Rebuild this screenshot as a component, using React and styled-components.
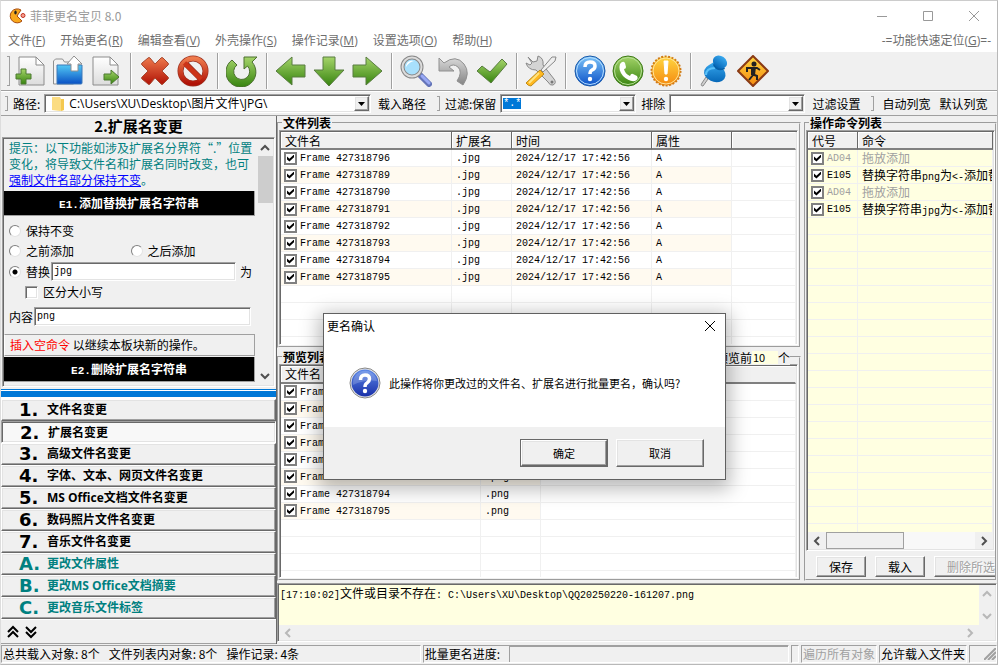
import React, { useEffect, useRef } from 'react';
import styled, { createGlobalStyle, css } from 'styled-components';

const GlobalStyle = createGlobalStyle`
    * {
        box-sizing: border-box;
    }

    body {
        margin: 0;
        background: #f0f0f0;
        color: #000;
        font-family: "Noto Sans CJK SC", sans-serif;
        font-size: 12px;
        line-height: 16px;
    }

    button, input, select {
        font: inherit;
        color: inherit;
        margin: 0;
    }
`;

// Classic bevels shared by the panels, boxes and buttons
const sunken = css`
    border: 1px solid;
    border-color: #a0a0a0 #fff #fff #a0a0a0;
    box-shadow: inset 1px 1px 0 #696969, inset -1px -1px 0 #e3e3e3;
`;

const raised = css`
    border: 1px solid;
    border-color: #fff #696969 #696969 #fff;
    box-shadow: inset -1px -1px 0 #a0a0a0, inset 1px 1px 0 #e3e3e3;
`;

const menus = [
    ['文件', 'F'],
    ['开始更名', 'R'],
    ['编辑查看', 'V'],
    ['外壳操作', 'S'],
    ['操作记录', 'M'],
    ['设置选项', 'O'],
    ['帮助', 'H'],
];

const frames = ['796', '789', '790', '791', '792', '793', '794', '795'].map((n) => `Frame 427318${n}`);

const commands = [
    { code: 'AD04' },
    { code: 'E105', ext: 'png' },
    { code: 'AD04' },
    { code: 'E105', ext: 'jpg' },
];

const sections = [
    { key: '1', label: '文件名变更' },
    { key: '2', label: '扩展名变更', active: true },
    { key: '3', label: '高级文件名变更' },
    { key: '4', label: '字体、文本、网页文件名变更' },
    { key: '5', label: 'MS Office文档文件名变更' },
    { key: '6', label: '数码照片文件名变更' },
    { key: '7', label: '音乐文件名变更' },
    { key: 'A', label: '更改文件属性', extra: true },
    { key: 'B', label: '更改MS Office文档摘要', extra: true },
    { key: 'C', label: '更改音乐文件标签', extra: true },
];

const Gradient = ({ id, from, to }) => (
    <linearGradient id={id} x1="0" y1="0" x2="0" y2="1">
        <stop offset="0" stopColor={from} />
        <stop offset="1" stopColor={to} />
    </linearGradient>
);

const Gradients = () => (
    <HiddenSvg width="0" height="0" aria-hidden="true">
        <defs>
            <Gradient id="green" from="#a5d46a" to="#37840f" />
            <Gradient id="red" from="#ee7a4c" to="#b01206" />
            <Gradient id="blue" from="#7cc4f8" to="#0a50c8" />
            <Gradient id="folder" from="#52c8f4" to="#0a50c4" />
            <Gradient id="paper" from="#ffffff" to="#dcdcdc" />
            <Gradient id="grey" from="#d8d8d8" to="#848484" />
            <Gradient id="amber" from="#ffd640" to="#f58a10" />
            <Gradient id="navy" from="#5b88e8" to="#1a30a8" />
            <Gradient id="pin" from="#38a8ee" to="#0668b8" />
        </defs>
    </HiddenSvg>
);

const Paper = ({ x }) => (
    <>
        <path d={`M${x} 2h17l8 8v20h-25z`} fill="url(#paper)" stroke="#8c8c8c" />
        <path d={`M${x + 17} 2v8h8z`} fill="#fff" stroke="#8c8c8c" />
    </>
);

const art = {
    add: (
        <>
            <Paper x={5} />
            <path d="M7 14h5v5h5v5h-5v5H7v-5H2v-5h5z" fill="url(#green)" stroke="#4c7a30" />
        </>
    ),
    open: (
        <>
            <path d="M1.500 29V6l2-2h7l2 3h9v22z" fill="#f2f2f2" stroke="#909090" />
            <path d="M5 10h25v18q0 1-1 1H5z" fill="url(#folder)" stroke="#3c78b8" />
            <path d="M22 1l8 8h-4v7h-7V9h-4z" fill="#fff" stroke="#909090" />
        </>
    ),
    export: (
        <>
            <Paper x={3} />
            <path d="M14 19h7v-4l8 7-8 7v-4h-7z" fill="url(#green)" stroke="#4c7a30" />
        </>
    ),
    remove: (
        <path
            d="M3 8l6-5q1-1 2 0l5 6 6-6q1-1 2 0l5 5q1 1 0 2l-6 6 6 6q1 1 0 2l-5 5q-1 1-2 0l-6-6-5 6q-1 1-2 0l-6-5q-1-1 0-2l6-6-6-6q-1-1 0-2z"
            fill="url(#red)"
            stroke="#a84830"
        />
    ),
    stop: (
        <>
            <circle cx="16" cy="16" r="12.500" fill="none" stroke="#9a3020" strokeWidth="6" />
            <path d="M8 8l16 16" stroke="#9a3020" strokeWidth="6" />
            <circle cx="16" cy="16" r="12.500" fill="none" stroke="url(#red)" strokeWidth="4.600" />
            <path d="M7.500 8l16.500 16.200" stroke="#cc3418" strokeWidth="4.600" />
        </>
    ),
    refresh: (
        <path
            d="M6 5l5 5a8 8 0 1 0 10.500 1L18 14V2h13l-5 5a15 15 0 1 1-20-2z"
            fill="url(#green)"
            stroke="#4c7030"
        />
    ),
    left: <path d="M1 16L17 2v8h13v12H17v8z" fill="url(#green)" stroke="#587c40" />,
    down: <path d="M16 31L1 15h9V2h12v13h9z" fill="url(#green)" stroke="#587c40" />,
    right: <path d="M31 16L15 2v8H2v12h13v8z" fill="url(#green)" stroke="#587c40" />,
    search: (
        <>
            <path d="M19 19l10 10" stroke="#6474b8" strokeWidth="6" strokeLinecap="round" />
            <path d="M22 21l7 7" stroke="#98a8f4" strokeWidth="3" strokeLinecap="round" />
            <circle cx="12" cy="12" r="9.500" fill="#a8e0fc" stroke="#888" strokeWidth="4" />
            <circle cx="12" cy="12" r="9.500" fill="none" stroke="#dcdcdc" strokeWidth="2" />
            <path d="M6 12a6 6 0 0 1 8-6q-5 1-8 6z" fill="#fff" />
        </>
    ),
    undo: (
        <path
            d="M1 3l5 5Q18-1 26 9q7 9-1 21l-6-4q6-9 1-14-5-4-9 0l5 4H1z"
            fill="url(#grey)"
            stroke="#909090"
        />
    ),
    check: <path d="M1 16l5-5 8 6L26 4l5 5-16 19z" fill="url(#green)" stroke="#587c40" />,
    tools: (
        <>
            <path d="M3 2l5 5 4-1 1-5q6 2 5 9l11 14q3 4-1 6-3 1-5-3L11 15Q3 15 1 8l4 2 2-2z" fill="#d4d4d4" stroke="#888" />
            <path d="M31 2l-4 0-11 13 2 2L30 6z" fill="#eee" stroke="#888" />
            <path d="M15 15l4 4L6 31q-3 0-5-3z" fill="#ffb820" stroke="#c08c18" />
            <path d="M14 18L4 28" stroke="#ffe480" strokeWidth="2" />
            <circle cx="27" cy="27" r="1.500" fill="#777" />
        </>
    ),
    help: (
        <>
            <circle cx="16" cy="16" r="15" fill="url(#blue)" stroke="#1858a8" />
            <circle cx="16" cy="16" r="13.500" fill="none" stroke="#b8e0ff" />
            <path d="M11 12q0-5 5-5t5 4q0 3-3 4-2 1-2 4" fill="none" stroke="#fff" strokeWidth="3.500" />
            <circle cx="16" cy="24" r="2.200" fill="#fff" />
        </>
    ),
    phone: (
        <>
            <circle cx="16" cy="16" r="15" fill="url(#green)" stroke="#3c7818" />
            <circle cx="16" cy="16" r="13.500" fill="none" stroke="#b8e098" />
            <path d="M8 9q3-4 5-1l1 4q0 2-2 2 1 5 6 7 1-3 3-2l4 2q2 3-2 5-6 1-12-5-5-6-3-12z" fill="#fff" />
        </>
    ),
    warn: (
        <>
            <circle cx="16" cy="16" r="14.500" fill="url(#amber)" stroke="#d07c18" strokeWidth="2" strokeDasharray="2 1.500" />
            <circle cx="16" cy="16" r="13" fill="none" stroke="#ffe49c" />
            <path d="M14 6h4l-1 13h-2z" fill="#fff" stroke="#fff" />
            <circle cx="16" cy="24" r="2.200" fill="#fff" />
        </>
    ),
    pin: (
        <>
            <path d="M9 24l-5 7q-3 0-1-3l4-6z" fill="#d0d0d0" stroke="#888" />
            <path d="M15 7l10 8q4 7-2 11-9 4-17-5-3-7 4-11z" fill="url(#pin)" />
            <path d="M7 20q0-7 9-7" fill="none" stroke="#58c0f8" strokeWidth="2" />
            <path d="M14 10q4 8 12 4l-2-4-8-4z" fill="#0560a8" />
            <ellipse cx="21" cy="7" rx="7.500" ry="6" transform="rotate(35 21 7)" fill="url(#pin)" />
        </>
    ),
    walk: (
        <>
            <path d="M16 1l15 15-15 15L1 16z" fill="url(#amber)" stroke="#8a3a14" strokeWidth="2" strokeLinejoin="round" />
            <circle cx="17" cy="9" r="2.500" fill="#222" />
            <path d="M10 17v-4h10l3 2M16 13v7l-4 5M15 19l5 2v4" fill="none" stroke="#222" strokeWidth="2" />
            <path d="M14 12h5l-1 8h-4z" fill="#222" />
        </>
    ),
};

const toolGroups = [
    [['add', '添加文件'], ['open', '添加文件夹'], ['export', '导出']],
    [['remove', '移除'], ['stop', '清空']],
    [['refresh', '刷新']],
    [['left', '上一步'], ['down', '向下'], ['right', '下一步']],
    [['search', '预览'], ['undo', '撤销'], ['check', '执行更名']],
    [['tools', '设置']],
    [['help', '帮助'], ['phone', '联系'], ['warn', '关于']],
    [['pin', '置顶'], ['walk', '退出']],
];

const Chevron = ({ dir }) => {
    const paths = {
        up: 'M1 7l4-4 4 4',
        down: 'M1 3l4 4 4-4',
        left: 'M7 1L3 5l4 4',
        right: 'M3 1l4 4-4 4',
    };
    return (
        <svg width="10" height="10" viewBox="0 0 10 10">
            <path d={paths[dir]} fill="none" stroke="currentColor" strokeWidth="2" />
        </svg>
    );
};

const DropArrow = () => (
    <DropBox>
        <svg width="7" height="4" viewBox="0 0 7 4">
            <path d="M0 0h7L3.500 4z" fill="#000" />
        </svg>
    </DropBox>
);

const CommandText = ({ ext }) => (
    ext ? <>替换字符串<Mono>{ext}</Mono>为<Mono>&lt;-</Mono>添加替换</> : '拖放添加'
);

const FileTable = ({ widths, head, rows, blanks, tint }) => (
    <Table>
        <colgroup>
            {widths.map((w, i) => (
                <Col key={i} $w={w} />
            ))}
            <col />
        </colgroup>
        <thead>
            <tr>
                {head.map((h) => (
                    <Th key={h}>{h}</Th>
                ))}
                {head.length <= widths.length && <Th $last />}
            </tr>
        </thead>
        <tbody>
            {rows.map((row, i) => (
                <tr key={i}>
                    {row.cells.map((cell, j) => (
                        <Td key={j} $tint={tint || (i % 2 ? '#fffaf0' : '#fff')} $off={row.off}>
                            {j === 0 ? (
                                <CellLabel>
                                    <Check type="checkbox" defaultChecked />
                                    <CellText>{cell}</CellText>
                                </CellLabel>
                            ) : (
                                row.wide ? cell : <CellText>{cell}</CellText>
                            )}
                        </Td>
                    ))}
                    {row.cells.length <= widths.length && <Td $tint={tint || '#fff'} />}
                </tr>
            ))}
            {Array.from({ length: blanks }, (_, i) => (
                <tr key={`blank${i}`}>
                    {[...widths, 0].map((_, j) => (
                        <Td key={j} $tint={tint || '#fff'} />
                    ))}
                </tr>
            ))}
        </tbody>
    </Table>
);

const App = () => {
    const keepRef = useRef(null);

    // The keep filter starts with its whole text selected
    useEffect(() => {
        keepRef.current.focus();
        keepRef.current.select();
    }, []);

    return (
        <Window>
            <GlobalStyle />
            <Gradients />
            <TitleBar>
                <svg width="17" height="16" viewBox="0 0 17 16">
                    <path d="M12 2A7 7 0 1 0 13 13L8 8z" fill="#f9a81c" stroke="#a84c10" />
                    <ellipse cx="6.500" cy="4.500" rx="1.200" ry="2" fill="#222" />
                    <circle cx="14" cy="7.500" r="2" fill="#f8a090" stroke="#c03020" />
                </svg>
                <Caption>菲菲更名宝贝 8.0</Caption>
                <CaptionButton aria-label="最小化">
                    <svg width="12" height="12"><path d="M1 6.500h10" stroke="currentColor" /></svg>
                </CaptionButton>
                <CaptionButton aria-label="最大化">
                    <svg width="12" height="12"><path d="M1.500 1.500h9v9h-9z" fill="none" stroke="currentColor" /></svg>
                </CaptionButton>
                <CaptionButton aria-label="关闭">
                    <svg width="12" height="12"><path d="M1 1l10 10M11 1L1 11" stroke="currentColor" /></svg>
                </CaptionButton>
            </TitleBar>
            <MenuBar>
                {menus.map(([label, key]) => (
                    <MenuItem key={key}>{label}(<u>{key}</u>)</MenuItem>
                ))}
                <Spacer />
                <MenuItem>-=功能快速定位(<u>G</u>)=-</MenuItem>
            </MenuBar>
            <Toolbar>
                <Grip />
                {toolGroups.map((group, i) => (
                    <ToolGroup key={i}>
                        {group.map(([name, label]) => (
                            <ToolButton key={name} aria-label={label}>
                                <svg width="32" height="32" viewBox="0 0 32 32">{art[name]}</svg>
                            </ToolButton>
                        ))}
                    </ToolGroup>
                ))}
            </Toolbar>
            <PathBar>
                <PathPart $w={374}>
                    <Grip />
                    <label htmlFor="path">路径:</label>
                    <Combo $grow>
                        <svg width="14" height="14" viewBox="0 0 14 14">
                            <path d="M1 0h8l1 2h3v11l-4 1-8-1z" fill="#fbdc82" />
                            <path d="M10 2h3v11l-3 1z" fill="#f4c850" />
                        </svg>
                        <PathSelect id="path">
                            <option>C:\Users\XU\Desktop\图片文件\JPG\</option>
                        </PathSelect>
                        <DropArrow />
                    </Combo>
                </PathPart>
                <FlatButton>载入路径</FlatButton>
                <PathPart>
                    <Grip />
                    <label htmlFor="keep">过滤:保留</label>
                    <Combo>
                        <ComboInput id="keep" ref={keepRef} defaultValue="*.*" />
                        <DropArrow />
                    </Combo>
                </PathPart>
                <PathPart>
                    <label htmlFor="skip">排除</label>
                    <Combo>
                        <ComboInput id="skip" />
                        <DropArrow />
                    </Combo>
                </PathPart>
                <FlatButton>过滤设置</FlatButton>
                <Grip />
                <FlatButton>自动列宽</FlatButton>
                <FlatButton>默认列宽</FlatButton>
            </PathBar>
            <Body>
                <Side>
                    <SideTitle>2.扩展名变更</SideTitle>
                    <OptionBox>
                        <Options>
                            <Hint>
                                提示：以下功能如涉及扩展名分界符“.”位置<br />
                                变化，将导致文件名和扩展名同时改变，也可<br />
                                <a href="#keep">强制文件名部分保持不变</a>。
                            </Hint>
                            <Banner><span>E1.</span>添加替换扩展名字符串</Banner>
                            <OptionRows>
                                <OptionLabel><Radio type="radio" name="mode" />保持不变</OptionLabel>
                                <OptionPair>
                                    <OptionLabel><Radio type="radio" name="mode" />之前添加</OptionLabel>
                                    <OptionLabel><Radio type="radio" name="mode" />之后添加</OptionLabel>
                                </OptionPair>
                                <OptionLine>
                                    <OptionLabel><Radio type="radio" name="mode" defaultChecked />替换</OptionLabel>
                                    <TextBox id="swap" aria-label="替换" defaultValue="jpg" />
                                    <label htmlFor="swap">为</label>
                                </OptionLine>
                                <OptionLabel $indent><PlainCheck type="checkbox" />区分大小写</OptionLabel>
                            </OptionRows>
                            <ContentLine>
                                <label htmlFor="content">内容</label>
                                <TextBox id="content" defaultValue="png" />
                            </ContentLine>
                            <Notice><em>插入空命令</em> 以继续本板块新的操作。</Notice>
                            <Banner><span>E2.</span>删除扩展名字符串</Banner>
                        </Options>
                        <VScroll $color="#505050">
                            <Chevron dir="up" />
                            <VThumb />
                            <Chevron dir="down" />
                        </VScroll>
                    </OptionBox>
                    <Splitter />
                    <nav>
                        {sections.map((s) => (
                            <SectionButton key={s.key} $active={s.active} $extra={s.extra}>
                                <b>{s.key}.</b>
                                {s.label}
                            </SectionButton>
                        ))}
                    </nav>
                    <SideFoot>
                        <FlatButton aria-label="上移">
                            <svg width="12" height="14" viewBox="0 0 12 14">
                                <path d="M1 7l5-5 5 5M1 12l5-5 5 5" fill="none" stroke="#000" strokeWidth="2" />
                            </svg>
                        </FlatButton>
                        <FlatButton aria-label="下移">
                            <svg width="12" height="14" viewBox="0 0 12 14">
                                <path d="M1 2l5 5 5-5M1 7l5 5 5-5" fill="none" stroke="#000" strokeWidth="2" />
                            </svg>
                        </FlatButton>
                    </SideFoot>
                </Side>
                <Main>
                    <Work>
                        <Lists>
                            <Group>
                                <Legend>文件列表</Legend>
                                <ListBox>
                                    <FileTable
                                        widths={[171, 60, 140, 80]}
                                        head={['文件名', '扩展名', '时间', '属性']}
                                        rows={frames.map((f) => ({ cells: [f, '.jpg', '2024/12/17 17:42:56', 'A'] }))}
                                        blanks={4}
                                    />
                                </ListBox>
                            </Group>
                            <Group>
                                <Legend>预览列表</Legend>
                                <PreviewCount>
                                    预览前
                                    <CountInput aria-label="预览前" defaultValue="10" />
                                    个
                                </PreviewCount>
                                <ListBox>
                                    <FileTable
                                        widths={[200, 60]}
                                        head={['文件名', '扩展名']}
                                        rows={frames.map((f) => ({ cells: [f, '.png'] }))}
                                        blanks={4}
                                    />
                                </ListBox>
                            </Group>
                        </Lists>
                        <CommandPane>
                            <Legend>操作命令列表</Legend>
                            <ListBox>
                                <TableClip>
                                    <FileTable
                                        widths={[50]}
                                        head={['代号', '命令']}
                                        rows={commands.map((c) => ({
                                            cells: [c.code, <CommandText ext={c.ext} />],
                                            off: !c.ext,
                                            wide: true,
                                        }))}
                                        blanks={20}
                                        tint="#ffffe1"
                                    />
                                </TableClip>
                                <HScroll $color="#505050">
                                    <Chevron dir="left" />
                                    <HTrack><HThumb /></HTrack>
                                    <Chevron dir="right" />
                                </HScroll>
                            </ListBox>
                            <CommandButtons>
                                <PushButton>保存</PushButton>
                                <PushButton>载入</PushButton>
                                <PushButton $wide disabled>删除所选</PushButton>
                            </CommandButtons>
                        </CommandPane>
                    </Work>
                    <LogBox>
                        <LogRow>
                            <LogText>
                                <Mono>[17:10:02]</Mono>文件或目录不存在<Mono>: C:\Users\XU\Desktop\QQ20250220-161207.png</Mono>
                            </LogText>
                            <VScroll $color="#b8b8b8">
                                <Chevron dir="up" />
                                <Chevron dir="down" />
                            </VScroll>
                        </LogRow>
                        <HScroll $color="#b8b8b8" $corner>
                            <Chevron dir="left" />
                            <Chevron dir="right" />
                        </HScroll>
                    </LogBox>
                </Main>
            </Body>
            <StatusBar>
                <StatusCell $grow={421}>
                    <span>总共载入对象: 8个</span>
                    <span>文件列表内对象: 8个</span>
                    <span>操作记录: 4条</span>
                </StatusCell>
                <StatusCell $grow={367}>
                    批量更名进度:
                    <Progress />
                </StatusCell>
                <StatusCell $w={8} />
                <StatusCell $w={76} $off>遍历所有对象</StatusCell>
                <StatusCell $w={88}>允许载入文件夹</StatusCell>
                <StatusCell $w={28}>
                    <SizeGrip width="12" height="12" viewBox="0 0 12 12">
                        <path d="M0 12L12 0M4 12l8-8M8 12l4-4" stroke="#a0a0a0" strokeWidth="2" />
                    </SizeGrip>
                </StatusCell>
            </StatusBar>
            <Dialog role="dialog" aria-label="更名确认">
                <DialogTitle>
                    更名确认
                    <FlatButton aria-label="关闭">
                        <svg width="12" height="12"><path d="M1 1l10 10M11 1L1 11" stroke="#000" /></svg>
                    </FlatButton>
                </DialogTitle>
                <DialogBody>
                    <svg width="32" height="32" viewBox="0 0 32 32">
                        <circle cx="16" cy="16" r="15" fill="#e8e8e8" stroke="#888" />
                        <circle cx="16" cy="16" r="13.500" fill="url(#navy)" />
                        <path d="M4 18a12 12 0 0 1 24-4q-12-2-24 4z" fill="#fff" opacity=".2" />
                        <path d="M11.500 13q0-5 4.500-5t4.500 4q0 2-2.500 4-2 1-2 4" fill="none" stroke="#fff" strokeWidth="3.500" />
                        <circle cx="16" cy="24" r="2.200" fill="#fff" />
                    </svg>
                    此操作将你更改过的文件名、扩展名进行批量更名，确认吗?
                </DialogBody>
                <DialogFoot>
                    <DialogButton $primary>确定</DialogButton>
                    <DialogButton>取消</DialogButton>
                </DialogFoot>
            </Dialog>
        </Window>
    );
};

const HiddenSvg = styled.svg`
    position: absolute;
`;

const Window = styled.div`
    position: relative;
    display: flex;
    flex-direction: column;
    height: 100vh;
    min-height: 640px;
    overflow: hidden;
    background: #f0f0f0;
    border: 1px solid #b8b8b8;
    border-top-color: #ccc;
    border-left-color: #ddd;
`;

const TitleBar = styled.header`
    display: flex;
    align-items: center;
    height: 30px;
    padding-left: 8px;
    background: #fff;
    color: #999;
`;

const Caption = styled.span`
    flex: 1;
    padding-left: 4px;
`;

const CaptionButton = styled.button`
    display: flex;
    align-items: center;
    justify-content: center;
    width: 46px;
    height: 28px;
    padding: 0;
    border: 0;
    background: none;
`;

const MenuBar = styled.nav`
    display: flex;
    align-items: center;
    gap: 15px;
    height: 20px;
    padding: 0 6px 0 7px;
    background: #fff;
    color: #6d6d6d;
`;

const MenuItem = styled.button`
    padding: 0;
    border: 0;
    background: none;
    font-family: "Open Sans", "Noto Sans CJK SC", sans-serif;
    white-space: nowrap;
`;

const Spacer = styled.span`
    flex: 1;
`;

const Toolbar = styled.div`
    display: flex;
    align-items: center;
    height: 40px;
    padding-left: 2px;
    border-top: 1px solid #fff;
    border-bottom: 1px solid #a0a0a0;
`;

const Grip = styled.span`
    flex: none;
    align-self: stretch;
    width: 3px;
    margin: 4px 1px 4px 4px;
    border: 1px solid #a0a0a0;
    border-left: 0;
`;

const ToolGroup = styled.div`
    display: flex;

    & + & {
        margin-left: 5px;
        padding-left: 5px;
        border-left: 1px solid #a0a0a0;
        box-shadow: inset 1px 0 0 #fff;
    }
`;

const ToolButton = styled.button`
    display: flex;
    align-items: center;
    justify-content: center;
    width: 38px;
    height: 36px;
    padding: 0;
    border: 0;
    background: none;
`;

const PathBar = styled.div`
    display: flex;
    align-items: center;
    gap: 5px;
    height: 25px;
    border-top: 1px solid #fff;
    border-bottom: 1px solid #a0a0a0;
    white-space: nowrap;
`;

const PathPart = styled.div`
    display: flex;
    align-items: center;
    align-self: stretch;
    gap: 4px;
    ${({ $w }) => $w && `flex: 0 1 ${$w - 4}px;`}
`;

const Combo = styled.div`
    ${sunken}
    display: flex;
    align-items: center;
    width: ${({ $grow }) => ($grow ? 'auto' : '136px')};
    ${({ $grow }) => $grow && 'flex: 1; padding-left: 6px;'}
    height: 19px;
    background: #fff;

    svg {
        flex: none;
    }
`;

const PathSelect = styled.select`
    flex: 1;
    min-width: 0;
    height: 17px;
    padding: 0 0 0 4px;
    border: 0;
    appearance: none;
    background: none;
    font-family: "Open Sans", "Noto Sans CJK SC", sans-serif;
    line-height: 17px;
`;

const ComboInput = styled.input`
    flex: 1;
    min-width: 0;
    height: 15px;
    padding: 0 0 0 1px;
    margin-left: 1px;
    border: 0;
    outline: 0;
    background: none;
    font: 10px/14px "Liberation Mono", monospace;

    &::selection {
        background: #0078d7;
        color: #fff;
    }
`;

const DropBox = styled.span`
    ${raised}
    display: flex;
    flex: none;
    align-items: center;
    justify-content: center;
    width: 15px;
    height: 15px;
    margin-right: 1px;
    background: #f0f0f0;
`;

const FlatButton = styled.button`
    display: flex;
    padding: 0 2px;
    border: 0;
    background: none;
    white-space: nowrap;
`;

const Body = styled.div`
    display: flex;
    flex: 1;
    min-height: 0;
`;

const Side = styled.aside`
    display: flex;
    flex: none;
    flex-direction: column;
    width: 275px;
`;

const SideTitle = styled.h1`
    margin: 0;
    font-size: 15px;
    line-height: 20px;
    text-align: center;
`;

const OptionBox = styled.div`
    ${sunken}
    display: flex;
    flex: 1;
    gap: 2px;
    min-height: 0;
    padding: 1px;
    margin: 1px 1px 0;
`;

const Options = styled.div`
    flex: 1;
    overflow: hidden;
    white-space: nowrap;
`;

const Hint = styled.p`
    margin: 1px 0 3px;
    padding-left: 5px;
    color: #008080;

    a {
        color: #00f;
    }
`;

const Banner = styled.h2`
    margin: 0;
    border: solid #a0a0a0;
    border-width: 0 1px 1px 0;
    background: #000;
    color: #fff;
    font-size: 12px;
    line-height: 24px;
    text-align: center;

    span {
        font-family: "Liberation Mono", monospace;
        font-size: 11px;
        line-height: 12px;
    }
`;

const OptionRows = styled.div`
    padding: 5px 3px 0 5px;
`;

const OptionLabel = styled.label`
    display: flex;
    flex: none;
    align-items: center;
    gap: 5px;
    height: 20px;
    padding-left: ${({ $indent }) => ($indent ? '16px' : '0')};
`;

const OptionPair = styled.div`
    display: grid;
    grid-template-columns: 1fr 1fr;
`;

const OptionLine = styled.div`
    display: flex;
    align-items: center;
    gap: 1px;
    height: 21px;

    & > label:last-child {
        padding-left: 3px;
    }
`;

const ContentLine = styled(OptionLine)`
    margin: 4px 4px 7px 5px;
`;

const Radio = styled.input`
    appearance: none;
    width: 12px;
    height: 12px;
    border: 1px solid;
    border-color: #808080 #e3e3e3 #e3e3e3 #808080;
    border-radius: 50%;
    background: #fff;

    &:checked {
        background: radial-gradient(circle, #000 0 2px, #fff 3px);
    }
`;

const PlainCheck = styled.input`
    ${sunken}
    appearance: none;
    width: 13px;
    height: 13px;
    background: #fff;
`;

const TextBox = styled.input`
    ${sunken}
    flex: 1;
    min-width: 0;
    height: 19px;
    padding: 0 2px;
    outline: 0;
    background: #fff;
    font: 10px/15px "Liberation Mono", monospace;
`;

const Notice = styled.p`
    margin: 0 0 1px;
    padding-left: 5px;
    border: 1px solid;
    border-color: #a0a0a0 #a0a0a0 #a0a0a0 #fff;
    line-height: 20px;

    em {
        color: #f00;
        font-style: normal;
    }
`;

const VScroll = styled.div`
    display: flex;
    flex: none;
    flex-direction: column;
    align-items: center;
    width: 16px;
    padding: 4px 0;
    background: #f0f0f0;
    color: ${({ $color }) => $color};

    svg:last-child {
        margin-top: auto;
    }
`;

const VThumb = styled.div`
    width: 15px;
    height: 47px;
    margin-top: 3px;
    background: #cdcdcd;
`;

const Splitter = styled.div`
    height: 10px;
    margin: 2px 0 0;
    border-top: 1px solid #0078d7;
    border-bottom: 2px solid #fff;
    background: linear-gradient(#fff 0 1px, #0078d7 1px);
`;

const SectionButton = styled.button`
    ${raised}
    display: flex;
    align-items: center;
    width: 100%;
    height: 22px;
    padding: 0 0 0 17px;
    background: #f0f0f0;
    color: ${({ $extra }) => ($extra ? '#008080' : '#000')};
    font-family: "Open Sans", "Noto Sans CJK SC", sans-serif;
    font-weight: 700;

    b {
        width: 28px;
        font-family: "DejaVu Sans", sans-serif;
        font-size: 18px;
        line-height: 18px;
        text-align: left;
    }

    ${({ $active }) => $active && css`
        ${sunken}
        padding: 2px 0 0 18px;
        background: #f8f8f8;
    `}
`;

const SideFoot = styled.div`
    display: flex;
    align-items: center;
    gap: 2px;
    height: 25px;
    padding-left: 4px;
    border-top: 1px solid #fff;
    border-bottom: 1px solid #a0a0a0;
`;

const Main = styled.main`
    display: flex;
    flex: 1;
    flex-direction: column;
    min-width: 0;
    border-left: 1px solid #696969;
`;

const Work = styled.div`
    display: flex;
    flex: 1;
    gap: 3px;
    min-height: 0;
    padding-bottom: 2px;
`;

const Lists = styled.div`
    display: flex;
    flex: 1;
    flex-direction: column;
    gap: 2px;
    min-width: 0;
`;

const Group = styled.fieldset`
    position: relative;
    display: flex;
    flex: 1;
    flex-direction: column;
    min-width: 0;
    min-height: 0;
    margin: 0;
    padding: 0 1px 1px 0;
    border: 2px groove #f0f0f0;
`;

const CommandPane = styled(Group)`
    flex: none;
    width: 193px;
    padding: 0;
`;

const Legend = styled.legend`
    margin-left: 3px;
    padding: 0 1px;
    font-weight: 700;
    line-height: 14px;
`;

// Sits on the top border of the preview group
const PreviewCount = styled.label`
    position: absolute;
    top: -13px;
    right: 9px;
    display: flex;
    background: #f0f0f0;
    line-height: 14px;
`;

const CountInput = styled.input`
    width: 26px;
    height: 13px;
    padding: 0 1px;
    border: 0;
    background: #ffffe1;
    font-size: 11px;
`;

const ListBox = styled.div`
    ${sunken}
    display: flex;
    flex: 1;
    flex-direction: column;
    min-height: 0;
    padding: 1px;
    overflow: hidden;
    background: #fff;
`;

const TableClip = styled.div`
    flex: 1;
    overflow: hidden;
    background: #ffffe1;
`;

const Table = styled.table`
    width: 100%;
    table-layout: fixed;
    border-collapse: separate;
    border-spacing: 0;
`;

const Col = styled.col`
    width: ${({ $w }) => $w}px;
`;

const Th = styled.th`
    height: 18px;
    padding: 0 4px;
    border-right: 1px solid ${({ $last }) => ($last ? '#f0f0f0' : '#696969')};
    border-bottom: 2px solid #808080;
    background: #f0f0f0;
    box-shadow: inset 1px 1px 0 #fff;
    font-weight: 400;
    line-height: 15px;
    text-align: left;
`;

const Td = styled.td`
    height: 17px;
    padding: 0 4px;
    border-right: 1px solid #f0f0f0;
    border-bottom: 1px solid #f0f0f0;
    background: ${({ $tint }) => $tint};
    color: ${({ $off }) => ($off ? '#a0a0a0' : '#000')};
    line-height: 16px;
    overflow: hidden;
    white-space: nowrap;

    &:first-child {
        padding: 0 0 0 3px;
    }
`;

const CellLabel = styled.label`
    display: flex;
    align-items: center;
    gap: 3px;
    height: 16px;
`;

const Mono = styled.span`
    font-family: "Liberation Mono", monospace;
    font-size: 10px;
    line-height: 10px;
    white-space: pre;
`;

const CellText = styled(Mono)`
    display: block;
    padding-top: 2px;
    line-height: 14px;
`;

const Check = styled.input`
    appearance: none;
    flex: none;
    width: 13px;
    height: 13px;
    border: 2px solid #808080;
    background: #fff;

    &:checked::before {
        content: "";
        display: block;
        width: 7px;
        height: 7px;
        margin: 1px;
        background: #000;
        clip-path: polygon(0 30%, 35% 60%, 100% 0, 100% 40%, 35% 100%, 0 70%);
    }
`;

const HScroll = styled.div`
    display: flex;
    flex: none;
    align-items: center;
    justify-content: space-between;
    height: ${({ $corner }) => ($corner ? '15px' : '17px')};
    padding: 0 ${({ $corner }) => ($corner ? '20px' : '4px')} 0 4px;
    background: #f0f0f0;
    color: ${({ $color }) => $color};
`;

const HTrack = styled.div`
    flex: 1;
    height: 17px;
    margin: 0 4px;
    background: #f8f8f8;
`;

const HThumb = styled.div`
    width: 78px;
    height: 17px;
    border: 1px solid #a0a0a0;
    background: #f0f0f0;
`;

const CommandButtons = styled.div`
    display: flex;
    gap: 9px;
    padding: 5px 0 2px 10px;
    overflow: hidden;
`;

const PushButton = styled.button`
    ${raised}
    flex: none;
    width: ${({ $wide }) => ($wide ? '74px' : '50px')};
    height: 21px;
    padding: 0;
    background: #f0f0f0;

    &:disabled {
        color: #a0a0a0;
        text-shadow: 1px 1px 0 #fff;
    }
`;

const LogBox = styled.section`
    ${sunken}
    flex: none;
    height: 59px;
    margin-bottom: 2px;
    padding: 1px;
`;

const LogRow = styled.div`
    display: flex;
    height: 40px;
`;

const LogText = styled.div`
    flex: 1;
    min-width: 0;
    padding-left: 1px;
    overflow: hidden;
    background: #ffffe1;
    white-space: nowrap;
`;

const StatusBar = styled.footer`
    display: flex;
    gap: 2px;
    height: 20px;
    padding: 1px 0;
`;

const StatusCell = styled.div`
    display: flex;
    align-items: center;
    gap: 9px;
    ${({ $grow, $w }) => ($grow ? `flex: ${$grow} 1 0;` : `flex: none; width: ${$w}px;`)}
    min-width: 0;
    padding-left: 1px;
    border: 1px solid;
    border-color: #a0a0a0 #fff #fff #a0a0a0;
    color: ${({ $off }) => ($off ? '#a0a0a0' : '#000')};
    white-space: nowrap;
`;

const Progress = styled.div`
    flex: 1;
    align-self: stretch;
    border-top: 1px solid #a0a0a0;
    border-left: 1px solid #a0a0a0;
`;

const SizeGrip = styled.svg`
    margin-left: auto;
`;

// The confirm window floats over the lists
const Dialog = styled.div`
    position: absolute;
    top: 312px;
    left: 322px;
    display: flex;
    flex-direction: column;
    width: 403px;
    border: 1px solid #606060;
    background: #fff;
    box-shadow: 0 5px 18px 4px rgba(0, 0, 0, 0.28);
`;

const DialogTitle = styled.div`
    display: flex;
    align-items: center;
    justify-content: space-between;
    height: 24px;
    padding: 0 7px 0 3px;
`;

const DialogBody = styled.div`
    display: flex;
    align-items: center;
    gap: 8px;
    height: 89px;
    padding: 0 25px;
    font-size: 11px;
    white-space: nowrap;

    svg {
        flex: none;
    }
`;

const DialogFoot = styled.div`
    display: flex;
    justify-content: flex-end;
    gap: 8px;
    padding: 12px 21px;
    background: #f0f0f0;
`;

const DialogButton = styled.button`
    ${raised}
    width: 88px;
    height: 28px;
    padding: 0;
    background: #f0f0f0;
    font-size: 11px;
    ${({ $primary }) => $primary && 'outline: 1px solid #696969; outline-offset: -1px; border-width: 2px;'}
`;

export default App;
